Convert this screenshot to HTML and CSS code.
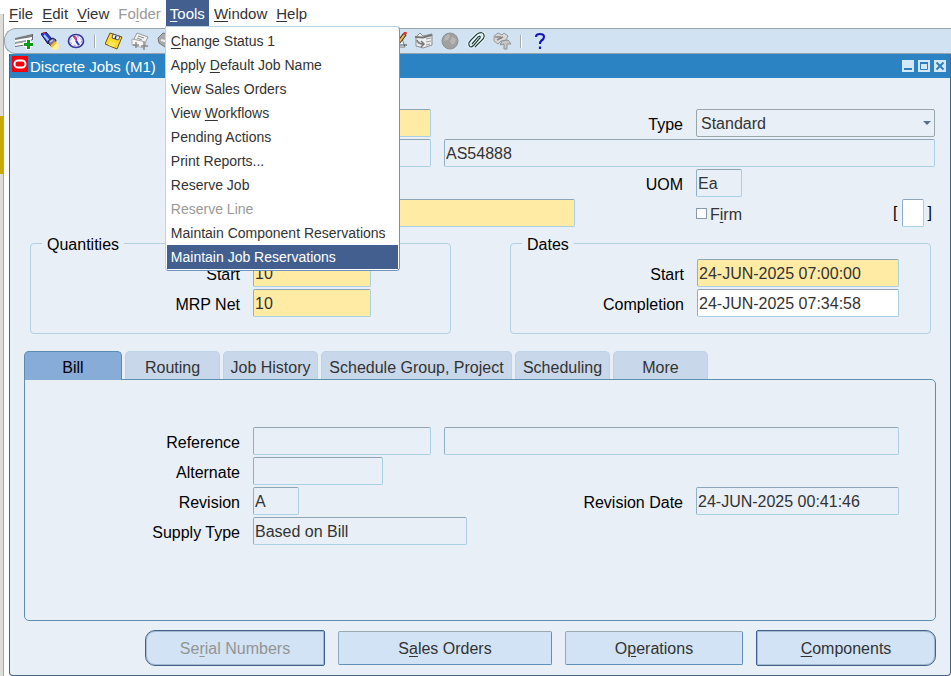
FILE: index.html
```
<!DOCTYPE html>
<html lang="en">
  <head>
    <meta charset="utf-8">
    <title>Discrete Jobs (M1)</title>
    <link rel="stylesheet" href="styles.css">
  </head>

  <body>
    <div class="edge"><div class="edge-mark"></div></div>

    <div class="app">
      <nav class="menubar">
        <button class="menu"><u>F</u>ile</button>
        <button class="menu"><u>E</u>dit</button>
        <button class="menu"><u>V</u>iew</button>
        <button class="menu" disabled>Fo<u>l</u>der</button>
        <div class="menu-open">
          <button class="menu active"><u>T</u>ools</button>
          <div class="dropdown">
            <button class="item"><u>C</u>hange Status 1</button>
            <button class="item">Apply <u>D</u>efault Job Name</button>
            <button class="item">View Sales Orders</button>
            <button class="item">View <u>W</u>orkflows</button>
            <button class="item">Pending Actions</button>
            <button class="item">Print Reports...</button>
            <button class="item">Reserve Job</button>
            <button class="item" disabled>Reserve Line</button>
            <button class="item">Maintain Component Reservations</button>
            <button class="item selected">Maintain Job Reservations</button>
          </div>
        </div>
        <button class="menu"><u>W</u>indow</button>
        <button class="menu"><u>H</u>elp</button>
      </nav>

      <div class="toolbar">
        <button class="tool" aria-label="New">
          <svg viewBox="0 0 18 18"><path d="M0 6 17 2V12L0 15Z" fill="#fff"/><path d="M0 6 17 2V5L0 8Z" fill="#777e84"/><path d="M0 10 17 7V9L0 12Z" fill="#969da2"/><path d="M0 14.500 10 13M17.500 2V8" stroke="#667"/><path d="M13.500 7v11M8.500 12.500h10" stroke="#fff" stroke-width="5"/><path d="M13.500 8v9M9 12.500h9" stroke="#079b1c" stroke-width="3"/></svg>
        </button>
        <button class="tool" aria-label="Find">
          <svg viewBox="0 0 18 18"><circle cx="14" cy="14" r="4" fill="#fff0a0"/><path d="M0 2 5 0 11 7 7 12Z" fill="#2a3fd0" stroke="#151560"/><path d="M3 3 8 9" stroke="#a9c4ff" stroke-width="2"/><path d="M7 11 8 8 12 6 15 8 14 12 10 14Z" fill="#77758e" stroke="#171745"/><path d="M9 10 12 8" stroke="#ccd3ee" stroke-width="1.500"/><path d="M10 15 15 10" stroke="#f0bd35" stroke-width="2.500"/><path d="M2 1 4 0" stroke="#e03a30" stroke-width="2"/></svg>
        </button>
        <button class="tool" aria-label="Show Navigator">
          <svg viewBox="0 0 18 18"><ellipse cx="9" cy="9" rx="7.500" ry="6.500" fill="#f3f4ff" stroke="#3a3798" stroke-width="1.700"/><ellipse cx="9" cy="9" rx="5.500" ry="4.500" fill="none" stroke="#8d97e3" stroke-dasharray="2 2"/><path d="M6 4 9 5 10 10Z" fill="#d7489f" stroke="#b83585"/><path d="M9 9 12 13" stroke="#263cc2" stroke-width="2"/></svg>
        </button>
        <span class="sep"></span>
        <button class="tool" aria-label="Save">
          <svg viewBox="0 0 18 18"><path d="M5 1 17 5 12 17 0 12Z" fill="#ffd928" stroke="#6c5514"/><path d="M8 2 15 4.500 13.500 8 7 6Z" fill="#eee" stroke="#55555f"/><path d="M11 4 10 7" stroke="#333" stroke-width="1.500"/><path d="M5 9 11 11 9 15 3 13Z" fill="#ffe65c"/></svg>
        </button>
        <button class="tool" aria-label="Next Step">
          <svg viewBox="0 0 18 18"><path d="M6 1 17 5 14 11 3 7Z" fill="#f3f3f3" stroke="#999"/><path d="M1 7 15 10 13 16 1 13Z" fill="#f8f8f8" stroke="#aaa"/><path d="M7 4 13 6M6 6 11 8" stroke="#888"/><path d="M5 10v6M2 13h6M13 10v8M10 14h7" stroke="#888" stroke-width="1.500"/></svg>
        </button>
        <button class="tool" aria-label="Print">
          <svg viewBox="0 0 18 18"><path d="M1 6 6 1 14 3 16 8 8 15 2 11Z" fill="#aaa" stroke="#777"/><path d="M4 8 12 10" stroke="#eee" stroke-width="2"/></svg>
        </button>
        <span class="tool-space"></span>
        <button class="tool" aria-label="Clear Record">
          <svg viewBox="0 0 18 18"><path d="M1 7H13L16 15H3Z" fill="#fff" stroke="#777"/><path d="M9 11 16 2" stroke="#46362c" stroke-width="4"/><path d="M10 10 16 2" stroke="#f4bd4b" stroke-width="2"/><path d="M15 3 17 0" stroke="#d5362d" stroke-width="3"/><path d="M9 13H18" stroke="#344a63"/></svg>
        </button>
        <button class="tool" aria-label="Translations">
          <svg viewBox="0 0 18 18"><path d="M1 5 5 1 8 4 17 2V13L8 16 1 14Z" fill="#eee" stroke="#8d8d8d"/><path d="M0 5 8 5.500 17 3" stroke="#777" stroke-width="2" fill="none"/><path d="M11 7 16 6M11 10 16 9M11 13 15 12" stroke="#999"/><path d="M2 8Q3 12 8 12M6 9 9 12 6 15" stroke="#777" stroke-width="1.500" fill="none"/></svg>
        </button>
        <button class="tool" aria-label="Attachments Web">
          <svg viewBox="0 0 18 18"><circle cx="9" cy="9" r="8" fill="#a0a0a0" stroke="#929292"/><path d="M4 5 7 2 9 4 7 8 3 9ZM11 5 15 7 14 11 11 13 9 9Z" fill="#b6b6b6"/></svg>
        </button>
        <button class="tool" aria-label="Attachments">
          <svg viewBox="0 0 18 18"><path d="M5 12 11 5Q14 3 13 6L7 13Q3 17 2 13Q1 11 4 8L10 2Q16-1 17 3Q18 6 14 9L8 15" fill="none" stroke="#f6ffff" stroke-width="3"/><path d="M5 12 11 5Q14 3 13 6L7 13Q3 17 2 13Q1 11 4 8L10 2Q16-1 17 3Q18 6 14 9L8 15" fill="none" stroke="#23423f" stroke-width="1.200"/></svg>
        </button>
        <button class="tool" aria-label="Folder Tools">
          <svg viewBox="0 0 18 18"><path d="M1 4 5 1 9 3 11 1 15 4 13 8 8 9 5 12 1 9Z" fill="#d8d8d8" stroke="#999"/><path d="M2 5H8M4 8 10 5" stroke="#888" stroke-width="1.500"/><path d="M7 13 9 9 15 8 18 12 14 12 14 17H11L11 12Z" fill="#c7c7c7" stroke="#929292"/></svg>
        </button>
        <span class="sep"></span>
        <button class="tool" aria-label="Help">
          <svg viewBox="0 0 18 18"><path d="M5 5Q5 2 9 2Q13 2 13 5Q13 7 10 9Q9 10 9 12M9 14.500V17" fill="none" stroke="#1717b5" stroke-width="2.200"/></svg>
        </button>
      </div>

      <main class="window">
        <header class="titlebar">
          <svg class="logo" viewBox="0 0 16 16"><path d="M0 0H16V16H0Z" fill="#f8000b"/><rect x="2.500" y="4.500" width="11" height="7" rx="3.500" fill="none" stroke="#fff" stroke-width="2"/></svg>
          <h1>Discrete Jobs (M1)</h1>
          <button class="winbtn" aria-label="Minimize"><svg viewBox="0 0 12 12"><path d="M2 9H10" stroke="#2e7fbd" stroke-width="2"/></svg></button>
          <button class="winbtn" aria-label="Maximize"><svg viewBox="0 0 12 12"><path d="M2.500 3V9.500H9.500V3M2 3H10" fill="none" stroke="#2e7fbd"/><path d="M2 3H10" stroke="#2e7fbd" stroke-width="2"/></svg></button>
          <button class="winbtn" aria-label="Close"><svg viewBox="0 0 12 12"><path d="M2.500 2.500 9.500 9.500M9.500 2.500 2.500 9.500" stroke="#2e7fbd" stroke-width="2"/></svg></button>
        </header>

        <section class="form job">
          <input class="field required col-2" aria-label="Job">
          <label class="col-3" for="type">Type</label>
          <div class="select col-4">
            <select class="field" id="type"><option>Standard</option></select>
          </div>

          <input class="field col-2" aria-label="Assembly">
          <input class="field wide" value="AS54888" aria-label="Description">

          <label class="col-3" for="uom">UOM</label>
          <input class="field short col-4" id="uom" value="Ea">

          <input class="field required class-name" aria-label="Class">
          <div class="firm col-4">
            <input type="checkbox" id="firm">
            <label for="firm">F<u>i</u>rm</label>
            <span class="flex">[<input class="field" aria-label="Flexfield">]</span>
          </div>
        </section>

        <section class="groups">
          <fieldset class="quantities">
            <legend>Quantities</legend>
            <label for="qty-start">Start</label>
            <input class="field required" id="qty-start" value="10">
            <label for="qty-net">MRP Net</label>
            <input class="field required" id="qty-net" value="10">
          </fieldset>
          <fieldset class="dates">
            <legend>Dates</legend>
            <label for="date-start">Start</label>
            <input class="field required" id="date-start" value="24-JUN-2025 07:00:00">
            <label for="date-end">Completion</label>
            <input class="field editable" id="date-end" value="24-JUN-2025 07:34:58">
          </fieldset>
        </section>

        <div class="tabs" role="tablist">
          <button class="tab current" role="tab" aria-selected="true">Bill</button>
          <button class="tab" role="tab">Routing</button>
          <button class="tab" role="tab">Job History</button>
          <button class="tab long" role="tab">Schedule Group, Project</button>
          <button class="tab" role="tab">Scheduling</button>
          <button class="tab" role="tab">More</button>
        </div>

        <section class="form bill" role="tabpanel">
          <label class="col-1" for="reference">Reference</label>
          <input class="field col-2" id="reference">
          <input class="field wide" aria-label="Reference description">

          <label class="col-1" for="alternate">Alternate</label>
          <input class="field alternate col-2" id="alternate">

          <label class="col-1" for="revision">Revision</label>
          <input class="field short col-2" id="revision" value="A">
          <label class="col-3" for="revision-date">Revision Date</label>
          <input class="field col-4" id="revision-date" value="24-JUN-2025 00:41:46">

          <label class="col-1" for="supply">Supply Type</label>
          <input class="field supply" id="supply" value="Based on Bill">
        </section>

        <footer class="actions">
          <button class="btn first" disabled>Se<u>r</u>ial Numbers</button>
          <button class="btn sales">S<u>a</u>les Orders</button>
          <button class="btn">O<u>p</u>erations</button>
          <button class="btn last"><u>C</u>omponents</button>
        </footer>
      </main>
    </div>
  </body>
</html>
```
FILE: styles.css
```
* {
  box-sizing: border-box;
}

body {
  display: flex;
  min-height: 100vh;
  margin: 0;
  background: #fff;
  color: #000;
  font: 16px/18px "Liberation Sans", Arial, sans-serif;
}

button, input, select {
  margin: 0;
  padding: 0;
  border: 0;
  border-radius: 0;
  background: none;
  color: #333;
  font: inherit;
}

u {
  text-underline-offset: 2px;
  text-decoration-thickness: 1px;
}

svg {
  display: block;
  width: 100%;
}

/* strip of the window behind */
.edge {
  width: 4px;
  margin-top: 14px;
  padding-top: 102px;
  border-right: 1px solid #a5a5a5;
  background: #deddda;
}

.edge-mark {
  height: 58px;
  background: #c8a900;
}

.app {
  display: flex;
  flex: 1;
  flex-direction: column;
  min-width: 0;
}

/* menu bar */
.menubar {
  display: flex;
  gap: 1px;
  height: 28px;
  padding-left: 1px;
  font-size: 15px;
}

.menu {
  height: 27px;
  padding: 0 4px;
}

.menu:disabled, .item:disabled {
  color: #999;
}

.menu.active {
  background: #435f8f;
  color: #fff;
}

.menu-open {
  position: relative;
}

.dropdown {
  position: absolute;
  z-index: 2;
  top: 26px;
  left: -1px;
  display: flex;
  flex-direction: column;
  min-width: 235px;
  padding: 2px 1px 1px;
  border: 1px solid #6f93ba;
  border-top-color: #b9d3e8;
  border-left-color: #b9d3e8;
  border-radius: 0 4px 4px 4px;
  background: #fff;
  font-size: 14px;
}

.item {
  height: 24px;
  padding: 0 4px;
  text-align: left;
  white-space: nowrap;
}

.item.selected {
  background: #435f8f;
  color: #fff;
}

/* toolbar */
.toolbar {
  display: flex;
  align-items: center;
  gap: 8px;
  height: 26px;
  padding-left: 10px;
  border: 1px solid #98a5ad;
  border-right: 0;
  border-radius: 12px 0 0 12px;
  background: #d1e2f3;
}

.tool {
  width: 18px;
}

.sep {
  width: 4px;
  height: 13px;
  background: linear-gradient(90deg, transparent 1px, #aaa 1px, #aaa 2px, #fff 2px, #fff 3px, transparent 3px);
}

.tool-space {
  width: 198px;
}

/* form window */
.window {
  flex: 1;
  margin-left: 5px;
  border: 1px solid #45648f;
  border-top: 0;
  border-radius: 0 0 4px 4px;
  background: #e9eff7;
}

.titlebar {
  display: flex;
  align-items: center;
  gap: 4px;
  height: 24px;
  padding: 0 4px 0 2px;
  background: #2b83c4;
}

.titlebar h1 {
  flex: 1;
  margin: 0 0 0 -2px;
  padding-top: 2px;
  color: #fff;
  font-size: 15px;
  font-weight: normal;
}

.logo {
  align-self: flex-start;
  width: 16px;
  margin-top: 2px;
}

.winbtn {
  width: 12px;
  height: 12px;
  background: #d4eafa;
}

label {
  padding-top: 4px;
  text-align: right;
  white-space: nowrap;
}

.field {
  width: 100%;
  min-width: 0;
  height: 28px;
  padding: 2px 1px 0;
  border: 1px solid #a9d0e3;
  border-top-color: #8fa5b5;
  border-left-color: #8fb0c4;
  border-radius: 2px;
}

.required {
  background: #ffeba4;
}

.editable {
  background: #fff;
}

.form {
  display: grid;
  grid-template-columns: 230px 178px 239px 1fr;
  grid-auto-rows: 28px;
  align-items: center;
  gap: 2px 13px;
}

.col-1 { grid-column: 1; }
.col-2 { grid-column: 2; }
.col-3 { grid-column: 3; }
.col-4 { grid-column: 4; }
.wide { grid-column: 3 / 5; }

.short {
  width: 46px;
}

.job {
  padding: 31px 15px 0 0;
}

.class-name {
  grid-column: 2 / 4;
  width: 322px;
}

.select {
  position: relative;
}

.select select {
  appearance: none;
  padding-left: 4px;
  border-color: #9aa7a8;
}

.select::after {
  position: absolute;
  top: 12px;
  right: 4px;
  border: 4px solid transparent;
  border-top-color: #59708a;
  border-bottom: 0;
  content: "";
}

.firm {
  display: flex;
  align-items: center;
  gap: 3px;
  color: #333;
}

.firm input[type="checkbox"] {
  appearance: none;
  width: 11px;
  height: 11px;
  border: 1px solid #8a9aa8;
  background: #fff;
}

.flex {
  display: flex;
  align-items: center;
  gap: 4px;
  margin: 0 3px 0 auto;
  color: #000;
}

.flex .field {
  width: 22px;
  background: #fff;
}

/* group boxes */
.groups {
  display: grid;
  grid-template-columns: 1fr 1fr;
  gap: 59px;
  padding: 5px 19px 0 20px;
}

fieldset {
  display: grid;
  grid-auto-rows: 28px;
  align-items: center;
  gap: 2px 13px;
  min-width: 0;
  margin: 0;
  padding: 5px 11px 16px;
  border: 1px solid #b2d0e0;
  border-radius: 4px;
}

legend {
  padding: 4px 5px 0;
}

.quantities {
  grid-template-columns: 198px 118px;
}

.dates {
  grid-template-columns: 162px 202px;
}

/* tabs */
.tabs {
  display: flex;
  gap: 3px;
  margin: 17px 14px 0;
}

.tab {
  min-width: 95px;
  height: 28px;
  padding: 4px 6px 0;
  border: 1px solid #bfd2e3;
  border-bottom: 0;
  border-radius: 5px 5px 0 0;
  background: #c8d7e9;
}

.tab.long {
  min-width: 191px;
}

.tab.current {
  min-width: 98px;
  height: 29px;
  margin-bottom: -1px;
  border-color: #5c8bb0;
  background: #86acd7;
  color: #000;
}

.bill {
  grid-template-columns: 215px 178px 239px 1fr;
  margin: 0 14px;
  padding: 47px 36px 75px 0;
  border: 1px solid #5c90ae;
  border-radius: 0 5px 5px 5px;
}

.alternate {
  width: 130px;
}

.supply {
  grid-column: 2 / 4;
  width: 214px;
}

/* bottom buttons */
.actions {
  display: flex;
  align-items: center;
  justify-content: flex-end;
  gap: 13px;
  padding: 9px 14px;
}

.btn {
  width: 178px;
  height: 34px;
  padding-top: 2px;
  border: 1px solid #5e90b8;
  border-top-color: #9aa9ae;
  border-left-color: #8fa9bb;
  border-radius: 2px;
  background: #d1e3f5;
}

.btn.sales {
  width: 214px;
}

.btn.first, .btn.last {
  width: 180px;
  height: 36px;
  border: 1px solid #43618f;
  box-shadow: inset 0 0 0 1px #a3b9cc;
}

.btn.first {
  border-radius: 10px 2px 2px 10px;
}

.btn.last {
  border-radius: 2px 10px 10px 2px;
}

.btn:disabled {
  color: #949494;
}
```
